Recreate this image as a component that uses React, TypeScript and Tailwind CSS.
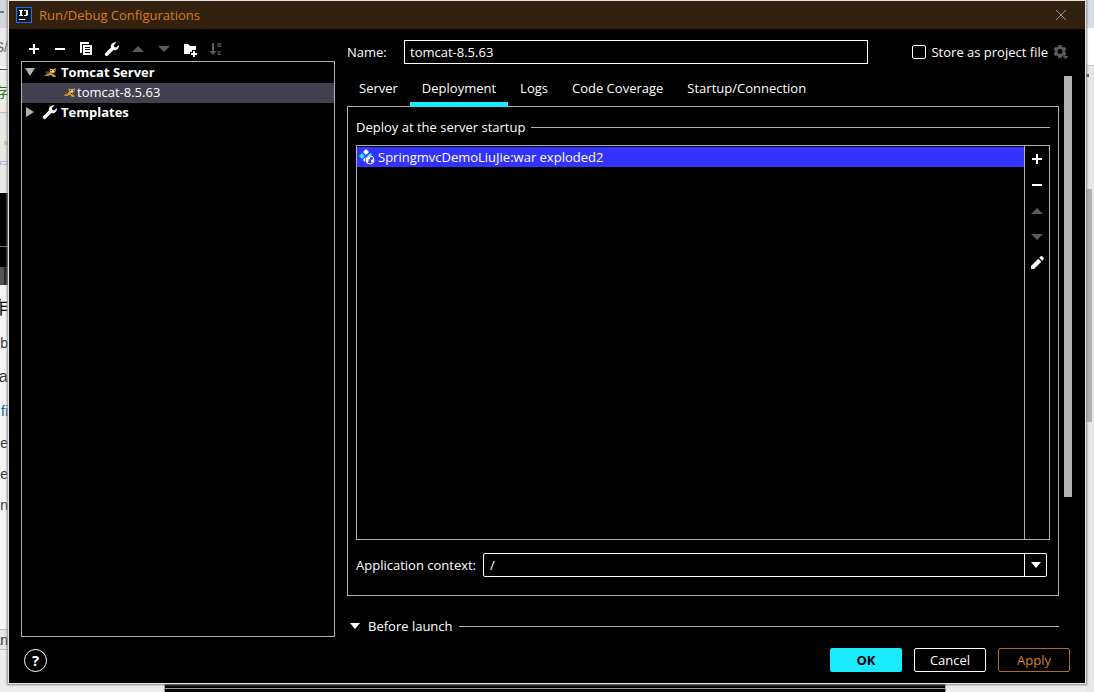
import { useState, type ReactNode } from 'react';

interface IconProps {
  className?: string;
}

function AddIcon({ className }: IconProps) {
  return (
    <svg viewBox="0 0 16 16" className={className ?? 'h-4 w-4'} fill="currentColor" aria-hidden="true">
      <path d="M7 3h2v4h4v2H9v4H7V9H3V7h4z" />
    </svg>
  );
}

function RemoveIcon() {
  return (
    <svg viewBox="0 0 16 16" className="h-4 w-4" fill="currentColor" aria-hidden="true">
      <path d="M3 7h10v2H3z" />
    </svg>
  );
}

function CopyIcon() {
  return (
    <svg viewBox="0 0 16 16" className="h-4 w-4" fill="currentColor" fillRule="evenodd" aria-hidden="true">
      <path d="M2 1h9v2H4v9H2z" />
      <path d="M5 4h9v10H5zM7 6v1h5V6zM7 8v1h5V8zM7 11v1h5v-1z" />
    </svg>
  );
}

function WrenchIcon({ className }: IconProps) {
  return (
    <svg viewBox="0 0 16 16" className={className ?? 'h-4 w-4'} fill="currentColor" aria-hidden="true">
      <path d="M14.800 3.900 12.300 6.400 10.200 6 9.900 4 12.300 1.500A4.300 4.300 0 0 0 6.900 6.600L1.400 12A1.700 1.700 0 0 0 3.900 14.500L9.400 9.100A4.300 4.300 0 0 0 14.800 3.900z" />
    </svg>
  );
}

function MoveUpIcon() {
  return (
    <svg viewBox="0 0 16 16" className="h-4 w-4" fill="currentColor" aria-hidden="true">
      <path d="M2 11 8 5l6 6z" />
    </svg>
  );
}

function MoveDownIcon() {
  return (
    <svg viewBox="0 0 16 16" className="h-4 w-4" fill="currentColor" aria-hidden="true">
      <path d="m2 5 6 6 6-6z" />
    </svg>
  );
}

function NewFolderIcon() {
  return (
    <svg viewBox="0 0 16 16" className="h-4 w-4" fill="currentColor" aria-hidden="true">
      <path d="M2 3h4l2 2h6v4h-4v2H8v2H2z" />
      <path d="M11 10h2v2h2v2h-2v2h-2v-2H9v-2h2z" />
    </svg>
  );
}

function SortIcon() {
  return (
    <svg viewBox="0 0 16 16" className="h-4 w-4" fill="currentColor" aria-hidden="true">
      <path d="M4 2h2v8h2.500L5 14 1.500 10H4z" />
      <text x="9" y="6" fontSize="8" fontWeight="700" fontFamily="Liberation Sans, sans-serif">a</text>
      <text x="9" y="14" fontSize="8" fontWeight="700" fontFamily="Liberation Sans, sans-serif">z</text>
    </svg>
  );
}

function PencilIcon() {
  return (
    <svg viewBox="0 0 16 16" className="h-4 w-4" fill="currentColor" aria-hidden="true">
      <path d="M2 11 9.300 3.700l3 3L5 14H2z" />
      <path d="m10.200 2.800 1.200-1.200a1.400 1.400 0 0 1 2 0l1 1a1.400 1.400 0 0 1 0 2l-1.200 1.200z" />
    </svg>
  );
}

function TomcatIcon() {
  return (
    <svg viewBox="0 0 16 16" className="h-4 w-4 shrink-0" aria-hidden="true">
      <path d="M2 12 5 9.500 8 8l2 1-3 1.500L5 12z" fill="#a07a24" />
      <path d="m2 8 4-1 2 1.500-2 1z" fill="#4c4536" />
      <path d="M7.500 4 9 5h3l2-1-.5 3.500L12 9l-1 1 2.500 1.500V13H11l-2-2-3 1H4l3-2.500L8 8z" fill="#c9993a" />
      <path d="m9 5.500 1.500 1 2-1-.5 2-1.500 1L9 7.500z" fill="#f5dc8c" />
      <path d="M9 6h1v1H9zM12 6h1v1h-1zM10 9h1v1h-1z" fill="#3b2a0a" />
    </svg>
  );
}

function ArtifactIcon() {
  return (
    <svg viewBox="0 0 16 16" className="h-4 w-4 shrink-0" aria-hidden="true">
      <path d="m7 0 3 3-3 3-3-3z" fill="#fff" />
      <path d="m3 4 3 3-3 3-3-3z" fill="#1aebff" />
      <path d="m11 4 2.500 2L9.500 7.500 8.500 6.500z" fill="#1aebff" />
      <path d="m6.500 8-2.700 2.700L6 13z" fill="#fff" />
      <circle cx="11" cy="11" r="4" fill="#3333ff" stroke="#fff" />
      <path d="m7.500 9.500 2.500-2 1.500.5-.5 2-1.500.5v2L8.500 14 7 12zM12 11l2.500-1v2l-2 2z" fill="#fff" />
    </svg>
  );
}

function GearIcon() {
  return (
    <svg viewBox="0 0 16 16" className="h-4 w-4" fill="currentColor" fillRule="evenodd" aria-hidden="true">
      <path d="M5.500 1h3l.4 1.900 1.300.7 1.800-.6 1.400 2.500L12 6.800v1.500l1.400 1.200L12 12l-1.800-.6-1.300.8-.4 1.800h-3l-.4-1.800-1.300-.8L2 12 .6 9.500 2 8.300V6.800L.6 5.500 2 3l1.800.6 1.300-.7zM7 5a2.500 2.500 0 1 0 0 5 2.500 2.500 0 0 0 0-5z" />
      <path d="M9.500 12h6l-3 3z" />
    </svg>
  );
}

function IdeaLogo() {
  return (
    <svg viewBox="0 0 16 16" className="h-4 w-4 shrink-0" aria-hidden="true">
      <path d="M0 0h16v16H0z" fill="#087cfa" />
      <path d="M1 1h14v14H1z" fill="#10131a" />
      <path d="M3 3h4v1H6v4h1v1H3V8h1V4H3zM8 3h4v5l-1 1H8V8h2V4H8zM3 12h6v1H3z" fill="#fff" />
    </svg>
  );
}

function ToolButton({ label, disabled, children }: { label: string; disabled?: boolean; children: ReactNode }) {
  return (
    <button
      type="button"
      aria-label={label}
      disabled={disabled}
      className="flex h-[26px] w-[26px] items-center justify-center text-white disabled:text-[#5c5c5c]"
    >
      {children}
    </button>
  );
}

const TABS = ['Server', 'Deployment', 'Logs', 'Code Coverage', 'Startup/Connection'];

// Whatever is open behind the dialog shows only as thin strips at its edges.
function Backdrop() {
  return (
    <div aria-hidden="true" className="absolute inset-0 overflow-hidden bg-[#ececec]">
      <div className="flex h-full justify-between">
        <div className="flex w-2 flex-col overflow-hidden whitespace-nowrap bg-[#f4f4f4] font-['Liberation_Sans',sans-serif] text-[14px] text-[#333]">
          <div className="h-7 shrink-0 bg-[#d2d8dd] pt-[11px]"><div className="h-[2px] w-1 bg-[#777]" /></div>
          <div className="flex h-[38px] shrink-0 items-center justify-end bg-[#e7e9ec] text-[#666]">S/</div>
          <div className="h-1 shrink-0 border-b border-[#555]" />
          <div className="flex h-[43px] shrink-0 items-center justify-end border-b border-[#bbb] bg-[#ebebe9] font-['Noto_Sans_CJK_SC',sans-serif] text-[#168016]">果存</div>
          <div className="flex h-20 shrink-0 flex-col items-end justify-center gap-4 bg-[#e8e8e5]">
            <div className="h-1 w-1 bg-[#d5cc8c]" />
            <div className="h-1 w-2 border border-[#a9bddb]" />
          </div>
          <div className="h-[54px] shrink-0 border-b border-[#777] bg-black" />
          <div className="h-5 shrink-0 bg-black" />
          <div className="flex h-[18px] shrink-0 justify-end bg-[#555]"><div className="w-1 bg-[#2a2425]" /></div>
          <div className="flex h-[42px] shrink-0 items-center justify-end font-['Noto_Sans_CJK_SC',sans-serif] text-[18px] text-black">作</div>
          <div className="flex h-8 shrink-0 items-center justify-end">b</div>
          <div className="flex h-9 shrink-0 items-center justify-end text-[17px]">a</div>
          <div className="flex h-8 shrink-0 items-center justify-end text-[#08639c]">fi</div>
          <div className="flex h-[31px] shrink-0 items-center justify-end">e</div>
          <div className="flex h-[31px] shrink-0 items-center justify-end">ne</div>
          <div className="flex h-[31px] shrink-0 items-center justify-end">on</div>
          <div className="flex-1" />
          <div className="flex h-[21px] shrink-0 items-center justify-end border-y border-[#bbb] bg-[#e6e6e6]">an</div>
          <div className="h-[42px] shrink-0 bg-[#ececec]" />
        </div>
        <div className="flex w-2 flex-col bg-[#e8e8e8]">
          <div className="h-7 bg-[#d9dfe5]" />
          <div className="h-[38px] border-b border-[#ccc] bg-white" />
          <div className="h-[123px] pt-2"><div className="h-[3px] w-[3px] bg-[#555]" /></div>
          <div className="mr-[2px] h-[233px] bg-[#b0b0b0]" />
        </div>
      </div>
      <div className="absolute bottom-0 left-[15%] right-[13.5%] h-2 border-x border-[#999] bg-black pt-1">
        <div className="h-px bg-[#999]" />
      </div>
    </div>
  );
}

function ConfigTree() {
  return (
    <div role="tree" aria-label="Configurations" className="min-h-0 flex-1 border border-[#b2b2b2] text-white">
      <div role="treeitem" aria-expanded="true" className="flex h-[21px] items-center gap-[3px] pb-[2px] pl-[3px] font-bold">
        <svg viewBox="0 0 10 10" className="h-[10px] w-[10px]" aria-hidden="true">
          <path d="M0 1h10L5 9z" fill="#b2b2b2" />
        </svg>
        <span className="ml-1"><TomcatIcon /></span>
        Tomcat Server
      </div>
      <div role="treeitem" aria-selected="true" className="flex h-5 items-center bg-[#43414f] pb-[2px] pl-[39px]">
        <TomcatIcon />
        tomcat-8.5.63
      </div>
      <div role="treeitem" aria-expanded="false" className="flex h-5 items-center gap-[3px] pb-[2px] pl-[3px] font-bold">
        <svg viewBox="0 0 10 10" className="h-[10px] w-[10px]" aria-hidden="true">
          <path d="M1 0v10l8-5z" fill="#b2b2b2" />
        </svg>
        <span className="ml-1"><WrenchIcon /></span>
        Templates
      </div>
    </div>
  );
}

function DeploymentPanel() {
  return (
    <div className="flex min-h-0 flex-1 flex-col border border-[#b2b2b2] px-2 pb-[18px] pt-[10px]">
      <div className="flex h-5 items-center gap-[6px]">
        <span>Deploy at the server startup</span>
        <div className="h-px flex-1 bg-[#b2b2b2]" />
      </div>
      <div className="mt-2 flex min-h-0 flex-1 border border-[#b2b2b2]">
        <div role="listbox" aria-label="Deploy at the server startup" className="flex-1 pt-px">
          <div role="option" aria-selected="true" className="flex h-5 items-center gap-[3px] bg-[#3333ff] pl-[2px]">
            <ArtifactIcon />
            SpringmvcDemoLiuJie:war exploded2
          </div>
        </div>
        <div className="flex flex-col border-l border-[#b2b2b2]">
          <div className="-mx-px flex flex-col">
            <ToolButton label="Add artifact"><AddIcon /></ToolButton>
            <ToolButton label="Remove artifact"><RemoveIcon /></ToolButton>
            <ToolButton label="Move artifact up" disabled><MoveUpIcon /></ToolButton>
            <ToolButton label="Move artifact down" disabled><MoveDownIcon /></ToolButton>
            <ToolButton label="Edit artifact"><PencilIcon /></ToolButton>
          </div>
        </div>
      </div>
      <div className="mr-[3px] mt-[13px] flex h-6 items-center">
        <label htmlFor="context" className="w-[127px]">Application context:</label>
        <div className="relative flex-1">
          <select
            id="context"
            className="block h-6 w-full appearance-none rounded-[2px] border border-white bg-black pl-[6px] text-white outline-none"
          >
            <option>/</option>
          </select>
          <div className="pointer-events-none absolute inset-y-0 right-0 flex w-[23px] items-center justify-center border-l border-white">
            <svg viewBox="0 0 10 6" className="h-[6px] w-[10px]" aria-hidden="true">
              <path d="M0 0h10L5 6z" fill="#fff" />
            </svg>
          </div>
        </div>
      </div>
    </div>
  );
}

export default function App() {
  const [name, setName] = useState('tomcat-8.5.63');
  const [tab, setTab] = useState('Deployment');
  const [stored, setStored] = useState(false);

  return (
    <div className="relative flex h-screen flex-col px-2 pb-2 font-['Open_Sans','Noto_Sans',sans-serif] text-[13px] leading-5">
      <Backdrop />
      <main className="relative flex min-h-0 flex-1 flex-col border border-[#e4e4e4] bg-black text-white shadow-[0_0_2px_1px_#888]">
        <header className="flex h-7 shrink-0 items-center bg-[#33200e] pl-[7px] pr-[18px] text-[#d6801f]">
          <IdeaLogo />
          <h1 className="ml-[7px] flex-1">Run/Debug Configurations</h1>
          <button type="button" aria-label="Close" className="text-[#999]">
            <svg viewBox="0 0 12 12" className="h-3 w-3" fill="none" stroke="currentColor" aria-hidden="true">
              <path d="m1 1 10 10M11 1 1 11" />
            </svg>
          </button>
        </header>

        <div className="flex min-h-0 flex-1 gap-3 pl-3 pr-[13px]">
          <section className="flex w-[314px] shrink-0 flex-col">
            <div className="flex h-8 items-center pt-2">
              <ToolButton label="Add configuration"><AddIcon /></ToolButton>
              <ToolButton label="Remove configuration"><RemoveIcon /></ToolButton>
              <ToolButton label="Copy configuration"><CopyIcon /></ToolButton>
              <ToolButton label="Edit templates"><WrenchIcon /></ToolButton>
              <ToolButton label="Move up" disabled><MoveUpIcon /></ToolButton>
              <ToolButton label="Move down" disabled><MoveDownIcon /></ToolButton>
              <ToolButton label="New folder"><NewFolderIcon /></ToolButton>
              <ToolButton label="Sort configurations" disabled><SortIcon /></ToolButton>
            </div>
            <ConfigTree />
          </section>

          <section className="flex min-w-0 flex-1 flex-col">
            <div className="flex items-center pr-[3px] pt-[11px]">
              <label htmlFor="name" className="w-[57px]">Name:</label>
              <input
                id="name"
                value={name}
                onChange={(e) => setName(e.target.value)}
                className="h-6 min-w-0 flex-1 border border-white bg-black px-[5px] outline-none"
              />
              <label className="ml-11 flex items-center gap-[5px]">
                <input
                  type="checkbox"
                  checked={stored}
                  onChange={(e) => setStored(e.target.checked)}
                  className="h-[14px] w-[14px] appearance-none rounded-[2px] border border-white checked:bg-[#1aebff]"
                />
                Store as project file
              </label>
              <button type="button" aria-label="Storage settings" className="ml-[5px] text-[#5c5c5c]">
                <GearIcon />
              </button>
            </div>

            <div className="mt-3 flex min-h-0 flex-1 gap-[5px]">
              <div className="flex min-w-0 flex-1 flex-col">
                <div role="tablist" className="flex h-[30px] shrink-0">
                  {TABS.map((t) => (
                    <button
                      key={t}
                      type="button"
                      role="tab"
                      aria-selected={t === tab}
                      onClick={() => setTab(t)}
                      className={[
                        'relative -mb-px border-b-[5px] px-3 pb-[2px]',
                        t === tab ? 'border-[#1aebff]' : 'border-transparent',
                      ].join(' ')}
                    >
                      {t}
                    </button>
                  ))}
                </div>
                <DeploymentPanel />
                <div className="mb-px mt-5 flex h-5 items-center gap-[6px]">
                  <button type="button" aria-expanded="true" className="flex items-center gap-2 pl-[3px]">
                    <svg viewBox="0 0 10 6" className="h-[6px] w-[10px]" aria-hidden="true">
                      <path d="M0 0h10L5 6z" fill="#fff" />
                    </svg>
                    Before launch
                  </button>
                  <div className="h-px flex-1 bg-[#b2b2b2]" />
                </div>
              </div>
              <div className="w-2">
                <div className="h-3/4 bg-[#b2b2b2]" />
              </div>
            </div>
          </section>
        </div>

        <footer className="flex h-[46px] shrink-0 items-center gap-3 px-[15px]">
          <button
            type="button"
            aria-label="Help"
            className="flex h-[23px] w-[23px] items-center justify-center rounded-full border border-white text-[15px] font-bold"
          >
            ?
          </button>
          <div className="flex-1" />
          <button type="button" className="h-6 w-[72px] rounded-[2px] bg-[#1aebff] font-bold text-black">OK</button>
          <button type="button" className="h-6 w-[72px] rounded-[2px] border border-white">Cancel</button>
          <button type="button" className="h-6 w-[72px] rounded-[2px] border border-[#b36b1b] text-[#d6801f]">Apply</button>
        </footer>
      </main>
    </div>
  );
}
